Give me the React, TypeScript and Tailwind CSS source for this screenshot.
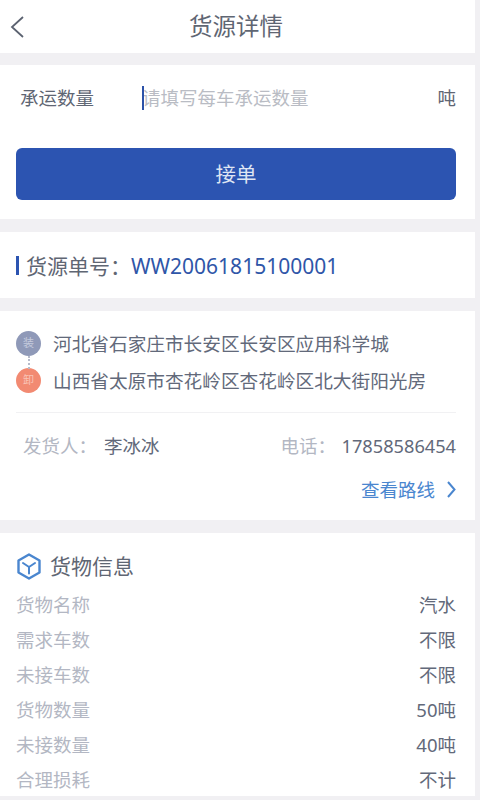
const cargoRows = [
  ["货物名称", "汽水"],
  ["需求车数", "不限"],
  ["未接车数", "不限"],
  ["货物数量", "50吨"],
  ["未接数量", "40吨"],
  ["合理损耗", "不计"],
];

function BoxIcon() {
  return (
    <svg width="26" height="27" viewBox="0 0 26 27" fill="none" stroke="#4a86cf" strokeLinejoin="round">
      <path d="M13 1.500 23.500 7.500V19.500L13 25.500 2.500 19.500V7.500Z" strokeWidth="2.400" />
      <path d="M7 10 13 14 19 10M13 14V20.500" strokeWidth="2" strokeLinecap="round" />
    </svg>
  );
}

export default function App() {
  return (
    <div
      lang="zh-CN"
      className="h-[800px] w-[480px] overflow-hidden bg-[#f1f0f3]"
      style={{ fontFamily: '"Noto Sans", "Noto Sans CJK SC", sans-serif' }}
    >
      <div className="w-[475px]">
        {/* Header */}
        <div className="flex h-[53px] items-center bg-white pl-[10px]">
          <svg width="14" height="22" viewBox="0 0 14 22" fill="none" stroke="#5b6270" strokeWidth="1.800">
            <path d="M13 1 2 11 13 21" />
          </svg>
          <span className="ml-[165px] text-[23.500px] text-[#5f6673]">货源详情</span>
        </div>

        {/* Accept order */}
        <div className="mt-3 h-[154px] bg-white pt-[14px] pr-[19px] pl-4">
          <div className="flex h-[38px] items-center text-[18.500px]">
            <span className="ml-1 w-[122px] text-[#5f6673]">承运数量</span>
            <div className="relative flex-1 text-[#b9bcc4]">
              <span className="absolute top-[2px] left-0 h-6 w-0.5 bg-[#2c52a8]" />
              请填写每车承运数量
            </div>
            <span className="text-[#5f6673]">吨</span>
          </div>
          <button className="mt-[31px] flex h-[52px] w-full items-center justify-center rounded-md bg-[#2c54b1] text-[20.500px] text-[#dfe5f3]">
            接单
          </button>
        </div>

        {/* Order number */}
        <div className="mt-[13px] flex h-[66px] items-center bg-white px-4 pt-[3px] text-[21px]">
          <span className="mr-[7px] -mt-[2px] h-[19px] w-[3px] bg-[#2c54b1]" />
          <span className="text-[#5f6673]">货源单号：</span>
          <span className="text-[#2f56a8]">WW20061815100001</span>
        </div>

        {/* Route */}
        <div className="mt-[13px] h-[209px] bg-white pt-5 pr-[19px] pl-4">
          <div className="relative border-b border-[#f1f1f3] pb-[19px] text-[18.670px] text-[#62697a]">
            <div className="flex h-[25px] items-center gap-[12px]">
              <span className="flex h-[25px] w-[25px] items-center justify-center rounded-full bg-[#8f99b8] text-[11px] text-[#c5cbdd]">
                装
              </span>
              河北省石家庄市长安区长安区应用科学城
            </div>
            <span className="absolute top-[25px] left-3 h-[13px] border-l-2 border-dotted border-[#b6bbcb]" />
            <div className="mt-3 flex h-[25px] items-center gap-[12px]">
              <span className="flex h-[25px] w-[25px] items-center justify-center rounded-full bg-[#f28a72] text-[11px] text-[#f9c3b6]">
                卸
              </span>
              山西省太原市杏花岭区杏花岭区北大街阳光房
            </div>
          </div>
          <div className="mt-[19px] flex items-center justify-between text-[18.500px] leading-[28px]">
            <div className="ml-[7px] flex">
              <span className="w-[81px] text-[#b3b7c3]">发货人：</span>
              <span className="text-[#62697a]">李冰冰</span>
            </div>
            <div className="flex">
              <span className="w-[61px] text-[#b3b7c3]">电话：</span>
              <span className="text-[18.200px] text-[#62697a]">17858586454</span>
            </div>
          </div>
          <div className="mt-[16px] flex items-center justify-end text-[18.500px] text-[#4a86cf]">
            查看路线
            <svg width="9" height="17" viewBox="0 0 9 17" fill="none" stroke="#4a86cf" strokeWidth="2" className="ml-[12px]">
              <path d="M1 1 7.500 8.500 1 16" />
            </svg>
          </div>
        </div>

        {/* Cargo info */}
        <div className="mt-[13px] h-[263px] bg-white pt-[20px] pr-[19px] pl-4">
          <div className="flex h-[27px] items-center gap-[8px] text-[21px] text-[#5f6673]">
            <BoxIcon />
            货物信息
          </div>
          <div className="mt-[7px] flex flex-col">
            {cargoRows.map(([label, value]) => (
              <div key={label} className="flex h-[35px] items-center justify-between text-[18.500px]">
                <span className="text-[#b3b7c3]">{label}</span>
                <span className="text-[#62697a]">{value}</span>
              </div>
            ))}
          </div>
        </div>
      </div>
    </div>
  );
}
